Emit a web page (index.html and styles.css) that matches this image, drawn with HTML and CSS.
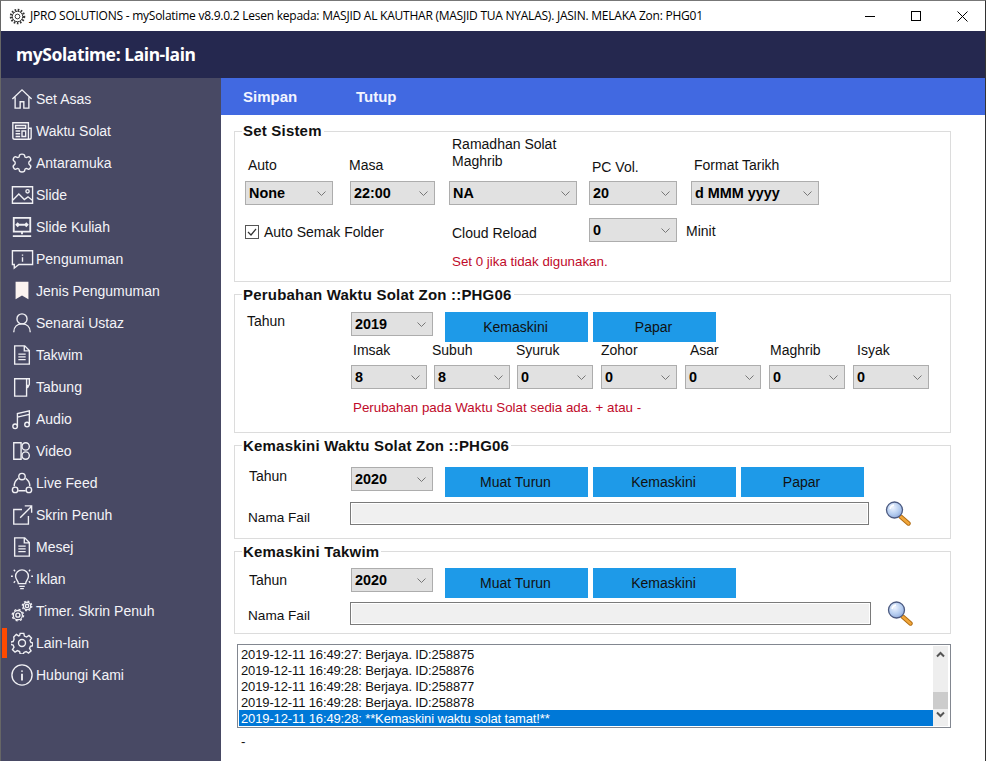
FILE: index.html
```html
<!DOCTYPE html>
<html lang="ms">
<head>
<meta charset="utf-8">
<title>mySolatime</title>
<link rel="stylesheet" href="styles.css">
</head>
<body>
<svg class="defs" aria-hidden="true">
  <defs>
    <symbol id="chev" viewBox="0 0 9 5"><path d="M.5.5l4 4 4-4" fill="none" stroke="#777" stroke-width="1"/></symbol>
    <radialGradient id="lens" cx=".4" cy=".35" r=".7"><stop offset="0" stop-color="#eef4ff"/><stop offset=".6" stop-color="#b5cdf0"/><stop offset="1" stop-color="#8fa8d8"/></radialGradient>
    <symbol id="mag" viewBox="0 0 26 25">
      <path d="M15.5 15.5l8 7" stroke="#b06a10" stroke-width="4.4" stroke-linecap="round"/>
      <path d="M15.5 15.5l8 7" stroke="#f0a63a" stroke-width="2.6" stroke-linecap="round"/>
      <circle cx="9.5" cy="9" r="8" fill="url(#lens)" stroke="#4c5a80" stroke-width="1.3"/>
      <path d="M5 8a5 5 0 0 1 4-4" fill="none" stroke="#fff" stroke-width="1.4"/>
    </symbol>
  </defs>
</svg>
<div class="window">
  <header class="titlebar">
    <svg class="app-gear" viewBox="0 0 18 18"><g fill="none" stroke="#333"><circle cx="9" cy="9" r="2.500" stroke-width="1"/><circle cx="9" cy="9" r="5.500" stroke-width="1"/><circle cx="9" cy="9" r="7" stroke-width="2.400" stroke-dasharray="1.700 1.600"/></g></svg>
    <span class="title-text">JPRO SOLUTIONS - mySolatime v8.9.0.2 Lesen kepada: MASJID AL KAUTHAR (MASJID TUA NYALAS). JASIN. MELAKA Zon: PHG01</span>
    <div class="win-controls">
      <svg viewBox="0 0 11 11"><path d="M0 5.500h10" stroke="#000"/></svg>
      <svg viewBox="0 0 11 11"><rect x=".5" y=".5" width="9" height="9" fill="none" stroke="#000"/></svg>
      <svg viewBox="0 0 11 11"><path d="M.5.5l10 10M10.500.5l-10 10" stroke="#000"/></svg>
    </div>
  </header>
  <div class="appbar">mySolatime: Lain-lain</div>
  <div class="main">
    <nav class="sidebar">
      <a class="nav-item"><svg class="ico" viewBox="0 0 24 24"><path d="M1.500 12L12 2l10.500 10M4.500 10v12h5.500v-7h4v7h5.500V10"/></svg>Set Asas</a>
      <a class="nav-item"><svg class="ico" viewBox="0 0 24 24"><path d="M2 3h17v18H4a2 2 0 0 1-2-2zM19 9h3v10a2 2 0 0 1-2 2h-1M5 6h11v3H5zM5 12h5M5 15h5M5 18h5M12 12h4v6h-4z"/></svg>Waktu Solat</a>
      <a class="nav-item"><svg class="ico" viewBox="0 0 24 24"><path d="M9 4.500c0-3 6-3 6 0 0 1.500 2 2 3 1 2.500-1.500 5 3 2.500 4.500-1.500.8-1.500 3 0 4 2.500 1.500 0 6-2.500 4.500-1-1-3-.5-3 1 0 3-6 3-6 0 0-1.500-2-2-3-1-2.500 1.500-5-3-2.500-4.500 1.500-1 1.500-3.200 0-4C1 8.500 3.500 4 6 5.500c1 1 3 .5 3-1z"/></svg>Antaramuka</a>
      <a class="nav-item"><svg class="ico wide" viewBox="0 0 24 24"><path d="M1 3h22v18H1zM1 18l7-7 6 6 4-3 5 4"/><circle cx="17.500" cy="8" r="1.800"/></svg>Slide</a>
      <a class="nav-item"><svg class="ico" viewBox="0 0 24 24"><path stroke-width="2" d="M3 2h18v15H3zM12 17v3M2 22h20M6 9.500h12M8 7.500l-2 2 2 2M16 7.500l2 2-2 2"/></svg>Slide Kuliah</a>
      <a class="nav-item"><svg class="ico wide" viewBox="0 0 24 24"><path d="M1 3h22v15H8l-5 4v-4H1zM12 7v1.500M12 10v5"/></svg>Pengumuman</a>
      <a class="nav-item"><svg class="ico" viewBox="0 0 24 24"><path class="solid" d="M5 2h14v19l-7-4-7 4z"/></svg>Jenis Pengumuman</a>
      <a class="nav-item"><svg class="ico" viewBox="0 0 24 24"><circle cx="12" cy="7.500" r="5.500"/><path d="M3 22c0-6 4-9 9-9s9 3 9 9"/></svg>Senarai Ustaz</a>
      <a class="nav-item"><svg class="ico" viewBox="0 0 24 24"><path d="M4 2h11l5 5v15H4zM14.500 2v5.500H20M8 11h8M8 14h8M8 17h8"/></svg>Takwim</a>
      <a class="nav-item"><svg class="ico" viewBox="0 0 24 24"><path d="M17 3H4v19h13zM17 3h3v6l-1.500 3-1.500-3z"/></svg>Tabung</a>
      <a class="nav-item"><svg class="ico" viewBox="0 0 24 24"><path d="M7 20V6l13-3v15M7 10l13-3"/><circle cx="4.500" cy="20" r="2.500"/><circle cx="17.500" cy="18" r="2.500"/></svg>Audio</a>
      <a class="nav-item"><svg class="ico" viewBox="0 0 24 24"><path d="M3 3h8v18H3z"/><circle cx="16" cy="7" r="4"/><circle cx="16" cy="17" r="4"/></svg>Video</a>
      <a class="nav-item"><svg class="ico" viewBox="0 0 24 24"><path d="M8 7C5 9 3.500 12 3.500 15.500M16 7c3 2 4.500 5 4.500 8.500M8 20.500h8"/><circle cx="12" cy="5" r="3.500"/><circle cx="4.500" cy="19.500" r="3"/><circle cx="19.500" cy="19.500" r="3"/></svg>Live Feed</a>
      <a class="nav-item"><svg class="ico" viewBox="0 0 24 24"><path d="M12 6H3v16h16v-9M10 15L22 3M15 2h7.500v7.500"/></svg>Skrin Penuh</a>
      <a class="nav-item"><svg class="ico" viewBox="0 0 24 24"><path d="M4 2h11l5 5v15H4zM14.500 2v5.500H20M8 11h8M8 14h8M8 17h8"/></svg>Mesej</a>
      <a class="nav-item"><svg class="ico" viewBox="0 0 24 24"><path d="M8 17c0-3-3-4-3-8a7 7 0 0 1 14 0c0 4-3 5-3 8zM9 20h6M10 22.500h4M0 9h2M22 9h2M3 2l1.500 1.500M21 2l-1.500 1.500M3 16l1.500-1.500M21 16l-1.500-1.500"/></svg>Iklan</a>
      <a class="nav-item"><svg class="ico" viewBox="0 0 24 24"><circle cx="7.500" cy="16.500" r="2.200"/><circle cx="7.500" cy="16.500" r="5"/><circle cx="7.500" cy="16.500" r="6.200" stroke-width="1.400" stroke-dasharray="2.300 2.570"/><circle cx="17.500" cy="6.500" r="1.800"/><circle cx="17.500" cy="6.500" r="4"/><circle cx="17.500" cy="6.500" r="5.200" stroke-width="1.400" stroke-dasharray="2 2.080"/></svg>Timer. Skrin Penuh</a>
      <a class="nav-item active"><svg class="ico" viewBox="0 0 24 24"><circle cx="12" cy="12" r="3.800"/><path d="M10 1.500h4l.6 3 2.400 1 2.600-1.700 2.800 2.800L20.700 9l1 2.400 2 .6v3l-2.500.6-1 2.400 1.700 2.600-2.800 2.400-2.600-1.700-2.400 1-.6 1.700h-3.500l-.6-2.700-2.400-1-2.600 1.700-2.800-2.800 1.700-2.600-1-2.400-2.700-.6V11l2.700-.6 1-2.400L3 5.400l2.800-2.800L8.400 4.300l1-.4z"/></svg>Lain-lain</a>
      <a class="nav-item"><svg class="ico" viewBox="0 0 24 24"><circle cx="12" cy="12" r="11"/><path stroke-width="2" d="M12 7v1.500M12 10.500V18"/></svg>Hubungi Kami</a>
    </nav>
    <main class="content">
      <div class="toolbar"><span class="tool tool-a">Simpan</span><span class="tool">Tutup</span></div>

      <section class="group g1">
        <div class="legend">Set Sistem</div>
        <div class="sys-grid">
          <label class="lbl-end">Auto</label>
          <label class="lbl-end masa">Masa</label>
          <label class="lbl-end two">Ramadhan Solat<br>Maghrib</label>
          <label class="lbl-end low">PC Vol.</label>
          <label class="lbl-end">Format Tarikh</label>

          <div class="select w88"><span>None</span><svg class="chev"><use href="#chev"/></svg></div>
          <div class="select w85"><span>22:00</span><svg class="chev"><use href="#chev"/></svg></div>
          <div class="select w128"><span>NA</span><svg class="chev"><use href="#chev"/></svg></div>
          <div class="select w88"><span>20</span><svg class="chev"><use href="#chev"/></svg></div>
          <div class="select w128"><span>d MMM yyyy</span><svg class="chev"><use href="#chev"/></svg></div>

          <div class="check-cell"><span class="checkbox"><svg viewBox="0 0 12 12"><path d="M2 6l3 3 5-6" fill="none" stroke="#333" stroke-width="1.200"/></svg></span>Auto Semak Folder</div>
          <div class="cloud">Cloud Reload</div>
          <div class="select w88 reload"><span>0</span><svg class="chev"><use href="#chev"/></svg></div>
          <div class="minit">Minit</div>
          <div class="red note-sys">Set 0 jika tidak digunakan.</div>
        </div>
      </section>

      <section class="group g2">
        <div class="legend">Perubahan Waktu Solat Zon ::PHG06</div>
        <div class="row row-g2">
          <div class="cap">Tahun</div>
          <div class="select w82"><span>2019</span><svg class="chev"><use href="#chev"/></svg></div>
          <div class="btns"><button class="btn w143">Kemaskini</button><button class="btn w123">Papar</button></div>
        </div>
        <div class="time-labels">
          <span>Imsak</span><span>Subuh</span><span>Syuruk</span><span>Zohor</span><span>Asar</span><span>Maghrib</span><span>Isyak</span>
        </div>
        <div class="time-selects">
          <div class="select w76"><span>8</span><svg class="chev"><use href="#chev"/></svg></div>
          <div class="select w76"><span>8</span><svg class="chev"><use href="#chev"/></svg></div>
          <div class="select w76"><span>0</span><svg class="chev"><use href="#chev"/></svg></div>
          <div class="select w76"><span>0</span><svg class="chev"><use href="#chev"/></svg></div>
          <div class="select w76"><span>0</span><svg class="chev"><use href="#chev"/></svg></div>
          <div class="select w76"><span>0</span><svg class="chev"><use href="#chev"/></svg></div>
          <div class="select w76"><span>0</span><svg class="chev"><use href="#chev"/></svg></div>
        </div>
        <div class="red note-time">Perubahan pada Waktu Solat sedia ada. + atau -</div>
      </section>

      <section class="group g3">
        <div class="legend">Kemaskini Waktu Solat Zon ::PHG06</div>
        <div class="row row-g3">
          <div class="cap cap-wide">Tahun</div>
          <div class="select w82"><span>2020</span><svg class="chev"><use href="#chev"/></svg></div>
          <div class="btns"><button class="btn w143">Muat Turun</button><button class="btn w143">Kemaskini</button><button class="btn w123">Papar</button></div>
        </div>
        <div class="row file-row file-g3">
          <div class="cap-file">Nama Fail</div>
          <div class="file w519"></div>
          <svg class="mag"><use href="#mag"/></svg>
        </div>
      </section>

      <section class="group g4">
        <div class="legend">Kemaskini Takwim</div>
        <div class="row row-g4">
          <div class="cap cap-wide cap-low">Tahun</div>
          <div class="select w82"><span>2020</span><svg class="chev"><use href="#chev"/></svg></div>
          <div class="btns"><button class="btn w143">Muat Turun</button><button class="btn w143">Kemaskini</button></div>
        </div>
        <div class="row file-row file-g4">
          <div class="cap-file">Nama Fail</div>
          <div class="file w521"></div>
          <svg class="mag"><use href="#mag"/></svg>
        </div>
      </section>

      <div class="log">
        <ul class="log-list">
          <li>2019-12-11 16:49:27: Berjaya. ID:258875</li>
          <li>2019-12-11 16:49:28: Berjaya. ID:258876</li>
          <li>2019-12-11 16:49:28: Berjaya. ID:258877</li>
          <li>2019-12-11 16:49:28: Berjaya. ID:258878</li>
          <li class="sel">2019-12-11 16:49:28: **Kemaskini waktu solat tamat!**</li>
        </ul>
        <div class="scroll">
          <svg viewBox="0 0 9 7"><path d="M1 5.500l3.500-3.500L8 5.500" fill="none" stroke="#555" stroke-width="2"/></svg>
          <div class="thumb"></div>
          <svg viewBox="0 0 9 7"><path d="M1 1.500L4.500 5 8 1.500" fill="none" stroke="#555" stroke-width="2"/></svg>
        </div>
      </div>
      <div class="dash">-</div>
    </main>
  </div>
</div>
</body>
</html>
```
FILE: styles.css
```css
* { box-sizing: border-box; }
html, body { margin: 0; padding: 0; height: 100%; background: #fff; overflow: hidden; }
body { font: 14px/16px "Liberation Sans", Arial, sans-serif; color: #111; }
.defs { width: 0; height: 0; display: block; overflow: hidden; }

.window { width: 986px; height: 761px; border-left: 1px solid #666; border-top: 1px solid #777; border-right: 1px solid #333; display: flex; flex-direction: column; }

.titlebar { height: 30px; flex: none; display: flex; align-items: center; background: #fff; padding-left: 8px; }
.app-gear { width: 17px; height: 17px; flex: none; }
.title-text { margin-left: 4px; font: 12px/16px "Open Sans", sans-serif; color: #000; white-space: nowrap; letter-spacing: -.24px; }
.win-controls { margin-left: auto; display: flex; gap: 35px; padding-right: 17px; }
.win-controls svg { width: 11px; height: 11px; display: block; }

.appbar { height: 47px; flex: none; background: #25284f; color: #fff; font: 700 17.5px/47px "Noto Sans", sans-serif; letter-spacing: -.4px; padding-left: 15px; }

.main { flex: 1; display: flex; min-height: 0; }

.sidebar { width: 220px; flex: none; background: #484964; padding-top: 5px; }
.nav-item { position: relative; display: flex; align-items: center; height: 32px; padding-left: 10px; color: #f4f4f8; font-size: 14px; }
.ico { width: 22px; height: 22px; flex: none; margin-right: 3px; fill: none; stroke: #f0f0f4; stroke-width: 1.500; }
.ico.wide { width: 23px; margin-right: 2.5px; margin-left: -0.5px; }
.ico .solid { fill: #fbf3f0; stroke: none; }
.nav-item.active::before { content: ""; position: absolute; left: 1px; top: 1px; width: 5px; height: 30px; background: #ff4a00; }

.content { flex: 1; min-width: 0; }
.toolbar { height: 37px; background: #4169e1; display: flex; align-items: center; padding-left: 22px; color: #f2f4ff; font-weight: 700; font-size: 15px; }
.tool-a { width: 113px; }

.group { margin-left: 13px; width: 717px; border: 1px solid #dcdcdc; }
.g1 { height: 151px; margin-top: 16px; }
.g2 { height: 139px; margin-top: 12px; }
.g3 { height: 94px; margin-top: 12px; }
.g4 { height: 83px; margin-top: 12px; }
.legend { width: fit-content; margin: -8px 0 0 7px; padding: 0 2px 0 1px; height: 16px; background: #fff; font-weight: 700; font-size: 15px; letter-spacing: .2px; line-height: 16px; color: #111; }
.g1 .legend { margin-top: -9px; }

.select { height: 24px; display: flex; align-items: center; justify-content: space-between; background: #e1e1e1; border: 1px solid #adadad; padding: 0 6px 0 3px; font-weight: 700; font-size: 14.4px; color: #000; }
.chev { width: 9px; height: 5px; flex: none; }
.w88 { width: 88px; } .w85 { width: 85px; } .w128 { width: 128px; } .w82 { width: 82px; } .w76 { width: 76px; }

.sys-grid { display: grid; grid-template-columns: 105px 99px 140px 102px 128px; grid-template-rows: 42px 37px 24px 40px; margin-left: 10px; }
.sys-grid .select { align-self: start; }
.lbl-end { align-self: end; padding: 0 0 8px 3px; }
.lbl-end.masa { margin-left: -1px; padding-left: 0; }
.lbl-end.two { padding-bottom: 11px; line-height: 17px; }
.lbl-end.low { padding-bottom: 6px; }
.check-cell { grid-row: 3; grid-column: 1 / span 2; display: flex; align-items: center; align-self: start; margin-top: 6px; }
.checkbox { width: 14px; height: 14px; border: 1px solid #555; background: #fff; margin-right: 5px; display: block; flex: none; }
.checkbox svg { display: block; width: 12px; height: 12px; }
.cloud { grid-row: 3; grid-column: 3; padding: 7px 0 0 3px; }
.sys-grid .reload { grid-row: 3; grid-column: 4; }
.minit { grid-row: 3; grid-column: 5; padding-top: 5px; margin-left: -5px; }
.red { color: #c00a2a; font-size: 13.33px; }
.note-sys { grid-row: 4; grid-column: 3 / span 3; padding: 12px 0 0 3px; }

.row { display: flex; }
.row-g2 { margin-top: 9px; height: 30px; }
.row-g3 { margin-top: 13px; height: 30px; }
.row-g4 { margin-top: 8px; height: 30px; }
.cap { width: 116px; padding: 1px 0 0 12px; flex: none; }
.cap-wide { padding: 1px 0 0 14px; }
.cap-low { padding-top: 4px; }
.btns { display: flex; gap: 5px; margin-left: 12px; }
.btn { height: 30px; border: 0; padding: 0 2px 0 0; background: #1e9ae8; color: #111; font: 14px "Liberation Sans", Arial, sans-serif; }
.w143 { width: 143px; } .w123 { width: 123px; }

.time-labels { display: grid; grid-template-columns: 79px 84px 85px 89px 80px 87px 60px; margin: 0 0 0 118px; height: 16px; }
.time-selects { display: grid; grid-template-columns: 83px 83px 84px 84px 84px 84px 76px; margin: 7px 0 0 116px; }
.note-time { margin: 11px 0 0 118px; }

.file-row { align-items: center; }
.file-g3 { margin-top: 4px; height: 24px; }
.file-g4 { margin-top: 3px; height: 24px; }
.cap-file { width: 115px; padding: 3px 0 0 13px; flex: none; font-size: 13.6px; }
.file-g3 .cap-file { padding-top: 10px; }
.file-g4 .cap-file { padding-top: 5px; }
.file { height: 23px; background: #f0f0f0; border: 1px solid #7a7a7a; box-shadow: inset 0 0 0 1px #fff; }
.w519 { width: 519px; } .w521 { width: 521px; }
.mag { width: 26px; height: 25px; margin-left: 16px; flex: none; }

.log { margin: 10px 0 0 16px; width: 714px; height: 84px; border: 1px solid #828790; padding: 1px; display: flex; }
.log-list { list-style: none; margin: 0; padding: 0; width: 694px; flex: none; font-size: 13px; letter-spacing: -.13px; }
.log-list li { height: 16px; line-height: 16px; padding: 1px 0 0 2px; color: #111; white-space: nowrap; }
.log-list .sel { background: #0078d7; color: #fff; }
.scroll { width: 15px; background: #eeeeee; display: flex; flex-direction: column; align-items: center; height: 80px; }
.scroll svg { width: 9px; height: 7px; flex: none; margin-top: 5px; }
.scroll svg:last-child { margin-top: 2px; }
.thumb { width: 15px; height: 17px; background: #cccccc; margin-top: 34px; }
.dash { margin: 6px 0 0 20px; font-size: 13.33px; }
```
